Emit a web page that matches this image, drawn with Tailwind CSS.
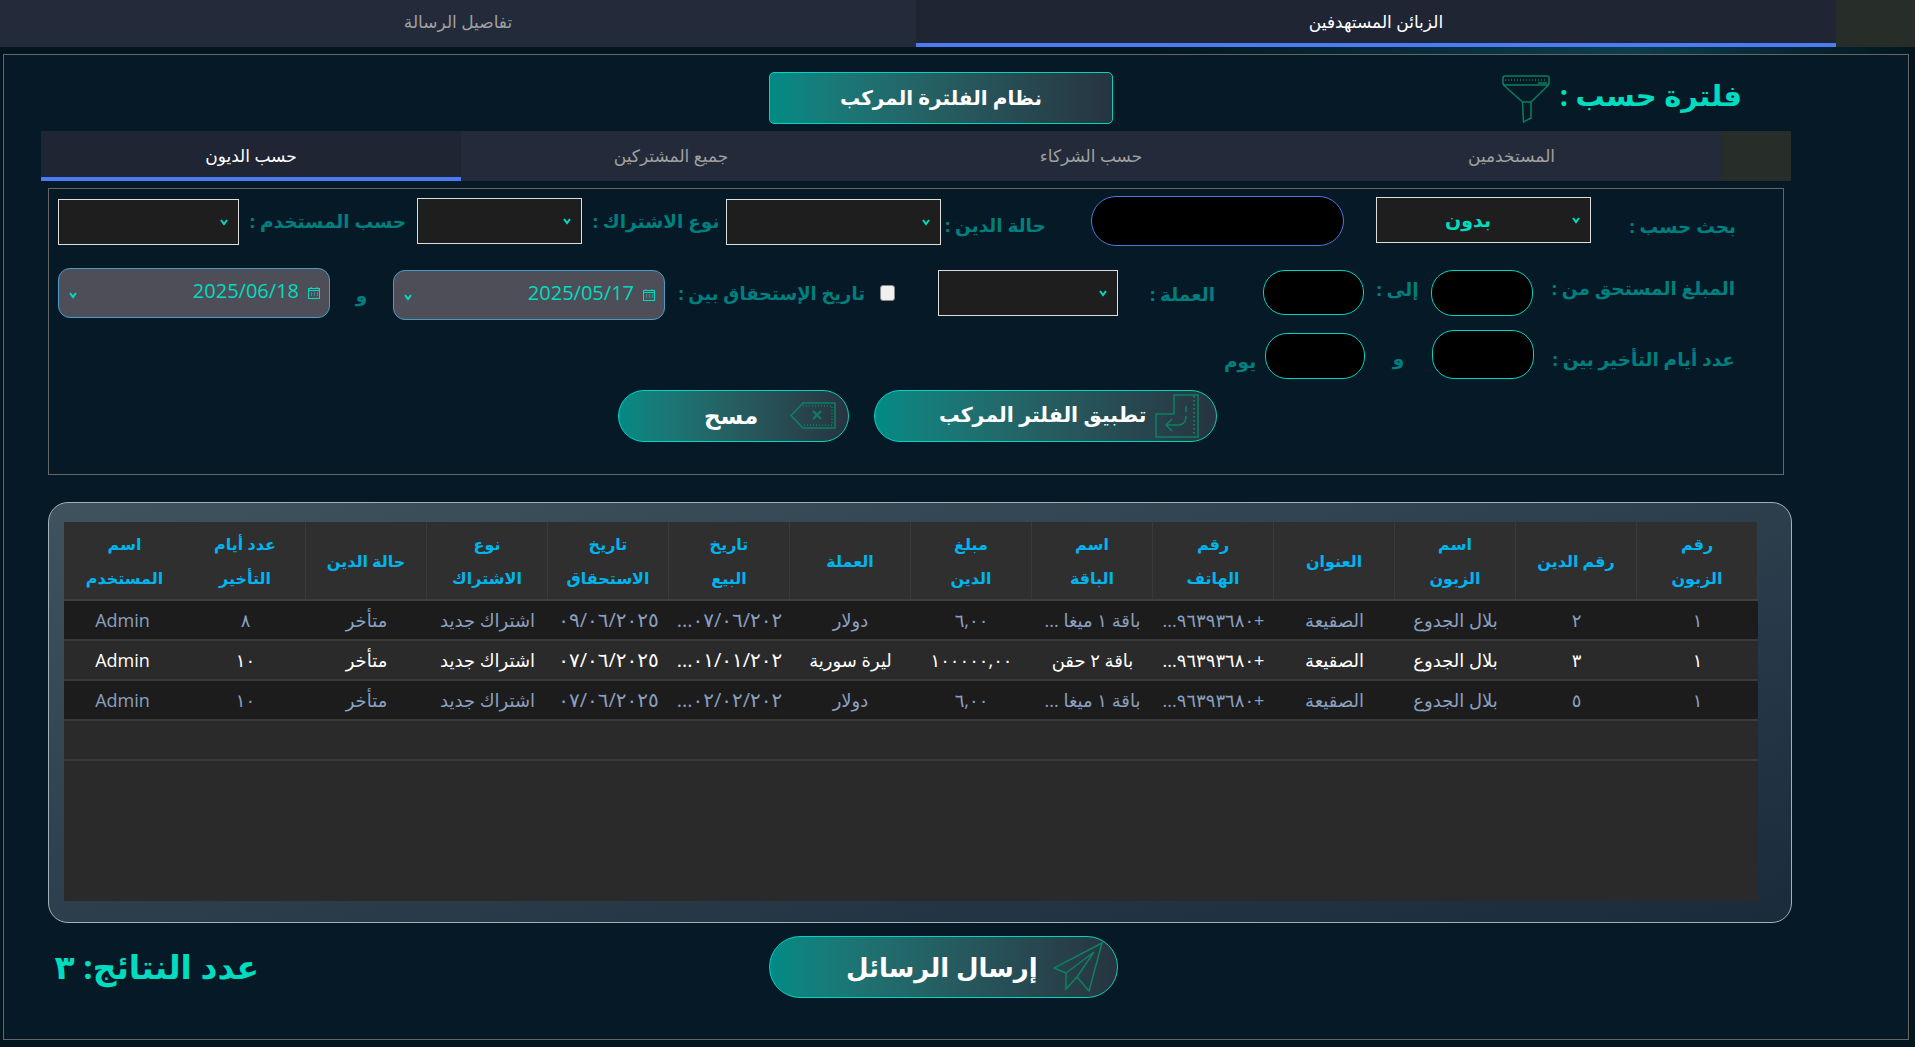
<!DOCTYPE html>
<html lang="ar">
<head>
<meta charset="UTF-8" />
<title>الرسائل</title>
<script src="https://cdn.jsdelivr.net/npm/@tailwindcss/browser@4"></script>
</head>
<body class="bg-[#03161f] h-[1047px] overflow-hidden font-['Open_Sans','Noto_Sans','DejaVu_Sans',sans-serif]">

<!-- top tabs -->
<div class="flex h-[47px] text-[17px]" dir="ltr">
  <div class="w-[916px] bg-[#232b3a] text-[#a0a0a0] flex items-center justify-center pb-[4px]">تفاصيل الرسالة</div>
  <div class="w-[920px] bg-[#1f2533] text-white flex items-center justify-center border-b-4 border-[#4a7cf6]">الزبائن المستهدفين</div>
  <div class="flex-1 bg-[#272d28]"></div>
</div>
<div class="h-[7px] bg-gradient-to-r from-[#03161f] from-60% via-[#0c3d4d] via-85% to-[#03161f]"></div>

<!-- main frame -->
<div class="ml-[3px] w-[1906px] h-[986px] border border-[#666] bg-[#051a26]">

  <!-- header -->
  <div class="flex pt-[17px] h-[76px]">
    <div class="ml-[765px] w-[344px] h-[52px] rounded-[5px] border border-[#00d5c0] bg-gradient-to-r from-[#008a85] to-[#263440] flex items-center justify-center text-white font-bold text-[20px]">نظام الفلترة المركب</div>
    <div class="ml-[389px] w-[48px] h-[48px] mt-[3px]">
      <svg viewBox="0 0 48 48" class="w-[48px] h-[48px]" fill="none" stroke="#0e7d5c" stroke-width="1.5">
        <rect x="1" y="1" width="46" height="9" rx="2" />
        <path d="M3 5h42" stroke-dasharray="1 2" />
        <path d="M36 8h9" />
        <path d="M1.5 10l19 17M46.5 10L29 27M20.5 27h8.5v16l-7.5 4z" />
      </svg>
    </div>
    <div class="ml-[8px] w-[184px] text-[#00dcc0] font-bold text-[29px] leading-[46px] text-right whitespace-nowrap" dir="rtl">فلترة حسب :</div>
  </div>

  <!-- inner tabs -->
  <div class="flex ml-[37px] w-[1750px] h-[50px] text-[17px] text-[#a0a0a0]">
    <div class="w-[420px] bg-[#1f2533] text-white flex items-center justify-center pt-[3px] border-b-4 border-[#4a7cf6]">حسب الديون</div>
    <div class="w-[420px] bg-[#232b3a] flex items-center justify-center">جميع المشتركين</div>
    <div class="w-[420px] bg-[#232b3a] flex items-center justify-center">حسب الشركاء</div>
    <div class="w-[421px] bg-[#232b3a] flex items-center justify-center">المستخدمين</div>
    <div class="flex-1 bg-[#272d28]"></div>
  </div>

  <!-- filter box -->
  <div class="ml-[44px] mt-[7px] w-[1736px] h-[287px] border border-[#666] text-[#007f7f] font-bold text-[18.5px] whitespace-nowrap" dir="ltr">

    <!-- row 1 -->
    <div class="flex items-start h-[50px] mt-[7px] pl-[9px]">
      <div class="w-[181px] h-[46px] mt-[3px] bg-[#1e1e1e] border border-[#ddd] flex items-center justify-end pr-[9px]"><svg viewBox="0 0 10 10" class="w-[10px] h-[10px]" fill="none" stroke="#00dcc0" stroke-width="2"><path d="M2 3l3 4 3-4" /></svg></div>
      <div class="w-[178px] h-[50px] flex items-center justify-center" dir="rtl">حسب المستخدم :</div>
      <div class="w-[165px] h-[46px] mt-[2px] bg-[#1e1e1e] border border-[#ddd] flex items-center justify-end pr-[9px]"><svg viewBox="0 0 10 10" class="w-[10px] h-[10px]" fill="none" stroke="#00dcc0" stroke-width="2"><path d="M2 3l3 4 3-4" /></svg></div>
      <div class="w-[144px] h-[50px] flex items-center justify-center pl-[4px]" dir="rtl">نوع الاشتراك :</div>
      <div class="w-[215px] h-[46px] mt-[3px] bg-[#1e1e1e] border border-[#ddd] flex items-center justify-end pr-[9px]"><svg viewBox="0 0 10 10" class="w-[10px] h-[10px]" fill="none" stroke="#00dcc0" stroke-width="2"><path d="M2 3l3 4 3-4" /></svg></div>
      <div class="w-[150px] h-[50px] pt-[8px] flex items-center justify-start pl-[4px]" dir="ltr"><span dir="rtl">حالة الدين :</span></div>
      <div class="w-[253px] h-[50px] bg-black border border-[#5078e0] rounded-[25px]"></div>
      <div class="ml-[32px] w-[215px] h-[46px] mt-[1px] bg-[#1e1e1e] border border-[#ddd] flex items-center pr-[9px]">
        <span class="flex-1 text-center pr-[12px] text-[#00dcc0] text-[19px]">بدون</span>
        <svg viewBox="0 0 10 10" class="w-[10px] h-[10px]" fill="none" stroke="#00dcc0" stroke-width="2"><path d="M2 3l3 4 3-4" /></svg>
      </div>
      <div class="flex-1 h-[50px] pt-[10px] flex items-center justify-end pr-[47px]" dir="ltr"><span dir="rtl">بحث حسب :</span></div>
    </div>

    <!-- row 2 -->
    <div class="flex items-start h-[52px] mt-[22px] pl-[9px]">
      <div class="w-[272px] h-[50px] bg-[#4d4e57] border border-[#4a9cc8] rounded-[12px] flex items-center pl-[9px] pr-[9px] text-[#00dcc0] font-normal text-[20px] pb-[4px]">
        <svg viewBox="0 0 10 10" class="w-[10px] h-[10px] mt-[8px]" fill="none" stroke="#00dcc0" stroke-width="2"><path d="M2 3l3 4 3-4" /></svg>
        <span class="ml-auto">2025/06/18</span>
        <svg viewBox="0 0 12 12" class="w-[12px] h-[12px] ml-[9px] mt-[4px]" fill="none" stroke="#00dcc0" stroke-width="1"><rect x="0.5" y="1.5" width="11" height="10" /><path d="M0.5 3.5h11M3 0v2M9 0v2M3 6h1M6 6h1M9 6h1M3 8h1M6 8h1M9 8h1" /></svg>
      </div>
      <div class="w-[63px] h-[50px] pt-[4px] flex items-center justify-center">و</div>
      <div class="w-[272px] h-[50px] mt-[2px] bg-[#4d4e57] border border-[#4a9cc8] rounded-[12px] flex items-center pl-[9px] pr-[9px] text-[#00dcc0] font-normal text-[20px] pb-[4px]">
        <svg viewBox="0 0 10 10" class="w-[10px] h-[10px] mt-[8px]" fill="none" stroke="#00dcc0" stroke-width="2"><path d="M2 3l3 4 3-4" /></svg>
        <span class="ml-auto">2025/05/17</span>
        <svg viewBox="0 0 12 12" class="w-[12px] h-[12px] ml-[9px] mt-[4px]" fill="none" stroke="#00dcc0" stroke-width="1"><rect x="0.5" y="1.5" width="11" height="10" /><path d="M0.5 3.5h11M3 0v2M9 0v2M3 6h1M6 6h1M9 6h1M3 8h1M6 8h1M9 8h1" /></svg>
      </div>
      <div class="w-[215px] h-[50px] flex items-center justify-end pr-[15px] text-[18px]"><span dir="rtl">تاريخ الإستحقاق بين :</span></div>
      <div class="w-[15px] h-[16px] mt-[17px] bg-[#f0f0f0] border border-[#888] rounded-[3px]"></div>
      <div class="ml-[43px] w-[180px] h-[46px] mt-[2px] bg-[#1e1e1e] border border-[#ddd] flex items-center justify-end pr-[9px]"><svg viewBox="0 0 10 10" class="w-[10px] h-[10px]" fill="none" stroke="#00dcc0" stroke-width="2"><path d="M2 3l3 4 3-4" /></svg></div>
      <div class="w-[145px] h-[50px] pt-[2px] flex items-center justify-start pl-[32px]"><span dir="rtl">العملة :</span></div>
      <div class="w-[101px] h-[45px] mt-[2px] bg-black border border-[#00d5c0] rounded-[22px]"></div>
      <div class="w-[67px] h-[50px] pb-[8px] flex items-center justify-center"><span dir="rtl">إلى :</span></div>
      <div class="w-[102px] h-[46px] mt-[2px] bg-black border border-[#00d5c0] rounded-[22px]"></div>
      <div class="flex-1 h-[40px] flex items-center justify-end pr-[48px]"><span dir="rtl">المبلغ المستحق من :</span></div>
    </div>

    <!-- row 3 -->
    <div class="flex items-start h-[49px] mt-[10px] pl-[1175px]">
      <div class="w-[41px] h-[56px] pt-[6px] flex items-center justify-start"><span dir="rtl">يوم</span></div>
      <div class="w-[100px] h-[46px] mt-[3px] bg-black border border-[#00d5c0] rounded-[22px]"></div>
      <div class="w-[67px] h-[49px] pt-[6px] flex items-center justify-center">و</div>
      <div class="w-[102px] h-[49px] bg-black border border-[#00d5c0] rounded-[22px]"></div>
      <div class="flex-1 h-[58px] flex items-center justify-end pr-[48px]"><span dir="rtl">عدد أيام التأخير بين :</span></div>
    </div>

    <!-- buttons -->
    <div class="flex mt-[11px] ml-[569px] gap-[25px] text-white text-[20.5px]">
      <div class="w-[231px] h-[52px] rounded-[26px] border border-[#00d5c0] bg-gradient-to-r from-[#008a85] to-[#263440] flex items-center pr-[12px] pb-[2px]">
        <span class="ml-[85px] text-[23px]" dir="rtl">مسح</span>
        <svg viewBox="0 0 46 27" class="w-[46px] h-[27px] ml-auto" fill="none" stroke="#0e8060" stroke-width="1.5">
          <path d="M1 13.5L13 1h32v25H13z" />
          <path d="M13 4h29v19H13" stroke-dasharray="1 2" />
          <path d="M23 9l8 8M31 9l-8 8" stroke-width="2" />
        </svg>
      </div>
      <div class="w-[343px] h-[52px] rounded-[26px] border border-[#00d5c0] bg-gradient-to-r from-[#008a85] to-[#263440] flex items-center pr-[17px]">
        <span class="ml-[64px] pb-[3px]" dir="rtl">تطبيق الفلتر المركب</span>
        <svg viewBox="0 0 44 44" class="w-[44px] h-[44px] ml-auto" fill="none" stroke="#0e8060" stroke-width="1.5">
          <path d="M19 1h24v42H1V20h18z" />
          <path d="M39 2v40" stroke-dasharray="1.5 2.5" stroke-width="2" />
          <path d="M31 12v6M31 22c0 6-3 9-8 9H11M17 25l-6 6 6 6" />
        </svg>
      </div>
    </div>
  </div>

  <!-- table panel -->
  <div class="ml-[44px] mt-[27px] w-[1744px] h-[421px] rounded-[20px] border border-[#a5b0b5] bg-gradient-to-br from-[#3f525d] to-[#1a2c3c] pt-[19px] pl-[15px]">
    <div class="w-[1694px] h-[379px] bg-[#2a2a2a] text-[18px] text-center" dir="rtl">
      <div class="grid grid-cols-14 h-[79px] bg-[#2f2f2f] text-[#00b4ee] font-bold text-[16px] leading-[34px] border-b-2 border-[#3f3f3f] divide-x divide-x-reverse divide-[#3a3a3a]">
        <div class="flex items-center justify-center px-6">رقم الزبون</div>
        <div class="flex items-center justify-center">رقم الدين</div>
        <div class="flex items-center justify-center px-6">اسم الزبون</div>
        <div class="flex items-center justify-center">العنوان</div>
        <div class="flex items-center justify-center px-6">رقم الهاتف</div>
        <div class="flex items-center justify-center px-6">اسم الباقة</div>
        <div class="flex items-center justify-center px-6">مبلغ الدين</div>
        <div class="flex items-center justify-center">العملة</div>
        <div class="flex items-center justify-center px-6">تاريخ البيع</div>
        <div class="flex items-center justify-center px-2">تاريخ الاستحقاق</div>
        <div class="flex items-center justify-center px-6">نوع الاشتراك</div>
        <div class="flex items-center justify-center">حالة الدين</div>
        <div class="flex items-center justify-center px-2">عدد أيام التأخير</div>
        <div class="flex items-center justify-center px-4">اسم المستخدم</div>
      </div>
      <div class="grid grid-cols-14 h-[40px] items-center bg-[#1c1c1c] text-[#8aa0c0] border-b-2 border-[#3a3a3a]">
        <div>١</div><div>٢</div><div>بلال الجدوع</div><div>الصقيعة</div><div dir="ltr">...٩٦٣٩٣٦٨٠+</div><div>باقة ١ ميغا ...</div><div dir="ltr">٦,٠٠</div><div>دولار</div><div dir="ltr" class="text-[20px]">...٠٧/٠٦/٢٠٢</div><div dir="ltr" class="text-[20px]">٠٩/٠٦/٢٠٢٥</div><div>اشتراك جديد</div><div>متأخر</div><div>٨</div><div dir="ltr" class="pr-[4px]">Admin</div>
      </div>
      <div class="grid grid-cols-14 h-[40px] items-center bg-[#2a2a2a] text-white border-b-2 border-[#3a3a3a]">
        <div>١</div><div>٣</div><div>بلال الجدوع</div><div>الصقيعة</div><div dir="ltr">...٩٦٣٩٣٦٨٠+</div><div>باقة ٢ حقن</div><div dir="ltr">١٠٠٠٠٠,٠٠</div><div>ليرة سورية</div><div dir="ltr" class="text-[20px]">...٠١/٠١/٢٠٢</div><div dir="ltr" class="text-[20px]">٠٧/٠٦/٢٠٢٥</div><div>اشتراك جديد</div><div>متأخر</div><div>١٠</div><div dir="ltr" class="pr-[4px]">Admin</div>
      </div>
      <div class="grid grid-cols-14 h-[40px] items-center bg-[#1c1c1c] text-[#8aa0c0] border-b-2 border-[#3a3a3a]">
        <div>١</div><div>٥</div><div>بلال الجدوع</div><div>الصقيعة</div><div dir="ltr">...٩٦٣٩٣٦٨٠+</div><div>باقة ١ ميغا ...</div><div dir="ltr">٦,٠٠</div><div>دولار</div><div dir="ltr" class="text-[20px]">...٠٢/٠٢/٢٠٢</div><div dir="ltr" class="text-[20px]">٠٧/٠٦/٢٠٢٥</div><div>اشتراك جديد</div><div>متأخر</div><div>١٠</div><div dir="ltr" class="pr-[4px]">Admin</div>
      </div>
      <div class="h-[40px] border-b-2 border-[#3a3a3a]"></div>
    </div>
  </div>

  <!-- footer -->
  <div class="flex items-start mt-[13px]">
    <div class="ml-[50px] w-[205px] mt-[9px] text-[#00dcc0] font-bold text-[33px] leading-[44px] whitespace-nowrap" dir="rtl">عدد النتائج: ٣</div>
    <div class="ml-[510px] w-[349px] h-[62px] rounded-[31px] border border-[#00d5c0] bg-gradient-to-r from-[#008a85] to-[#263440] flex items-center pr-[14px] text-white font-bold text-[26px]">
      <span class="ml-[76px] whitespace-nowrap" dir="rtl">إرسال الرسائل</span>
      <svg viewBox="0 0 50 50" class="w-[50px] h-[50px] ml-auto" fill="none" stroke="#0e8060" stroke-width="1.5">
        <path d="M49 1L1 26l12 5v16l11-12 12 14zM13 31L41 10 24 35" />
      </svg>
    </div>
  </div>
</div>
</body>
</html>
